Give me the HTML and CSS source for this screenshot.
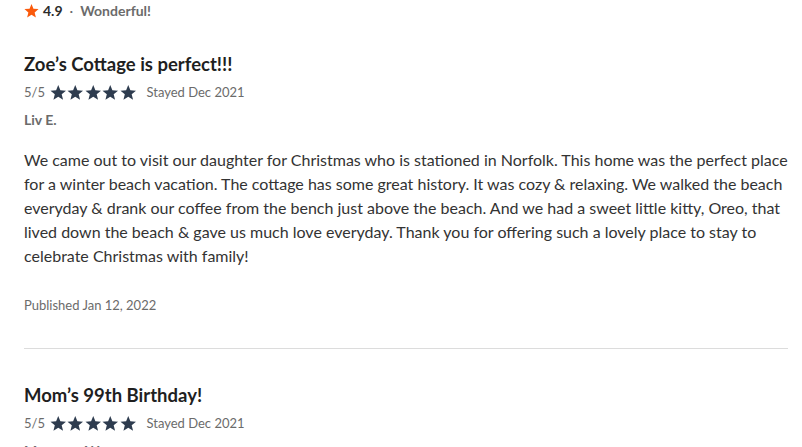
FILE: index.html
```html
<!DOCTYPE html>
<html lang="en">

<head>
    <meta charset="UTF-8">
    <meta name="viewport" content="width=device-width, initial-scale=1.0">
    <title>Reviews</title>
    <link rel="stylesheet" href="styles.css">
</head>

<body>
    <div class="reviews">
        <div class="summary">
            <svg class="summary-star" viewBox="0 0 24 24" aria-hidden="true">
                <path d="M12 1.5l3.1 7.6 8.2.6-6.3 5.3 2 8-7-4.3-7 4.3 2-8L.7 9.7l8.2-.6z" />
            </svg>
            <span class="summary-score">4.9</span>
            <span class="summary-dot">&middot;</span>
            <span class="summary-label">Wonderful!</span>
        </div>

        <article class="review">
            <h3 class="review-title">Zoe’s Cottage is perfect!!!</h3>
            <div class="review-meta">
                <span class="review-rating">5/5</span>
                <span class="stars">
                    <svg viewBox="0 0 24 24"><path d="M12 1.5l3.1 7.6 8.2.6-6.3 5.3 2 8-7-4.3-7 4.3 2-8L.7 9.7l8.2-.6z" /></svg>
                    <svg viewBox="0 0 24 24"><path d="M12 1.5l3.1 7.6 8.2.6-6.3 5.3 2 8-7-4.3-7 4.3 2-8L.7 9.7l8.2-.6z" /></svg>
                    <svg viewBox="0 0 24 24"><path d="M12 1.5l3.1 7.6 8.2.6-6.3 5.3 2 8-7-4.3-7 4.3 2-8L.7 9.7l8.2-.6z" /></svg>
                    <svg viewBox="0 0 24 24"><path d="M12 1.5l3.1 7.6 8.2.6-6.3 5.3 2 8-7-4.3-7 4.3 2-8L.7 9.7l8.2-.6z" /></svg>
                    <svg viewBox="0 0 24 24"><path d="M12 1.5l3.1 7.6 8.2.6-6.3 5.3 2 8-7-4.3-7 4.3 2-8L.7 9.7l8.2-.6z" /></svg>
                </span>
                <span class="review-stay">Stayed Dec 2021</span>
            </div>
            <div class="review-author">Liv E.</div>
            <p class="review-body">We came out to visit our daughter for Christmas who is stationed in Norfolk. This home was the perfect place for a winter beach vacation. The cottage has some great history. It was cozy &amp; relaxing. We walked the beach everyday &amp; drank our coffee from the bench just above the beach. And we had a sweet little kitty, Oreo, that lived down the beach &amp; gave us much love everyday. Thank you for offering such a lovely place to stay to celebrate Christmas with family!</p>
            <div class="review-date">Published Jan 12, 2022</div>
        </article>

        <article class="review">
            <h3 class="review-title">Mom’s 99th Birthday!</h3>
            <div class="review-meta">
                <span class="review-rating">5/5</span>
                <span class="stars">
                    <svg viewBox="0 0 24 24"><path d="M12 1.5l3.1 7.6 8.2.6-6.3 5.3 2 8-7-4.3-7 4.3 2-8L.7 9.7l8.2-.6z" /></svg>
                    <svg viewBox="0 0 24 24"><path d="M12 1.5l3.1 7.6 8.2.6-6.3 5.3 2 8-7-4.3-7 4.3 2-8L.7 9.7l8.2-.6z" /></svg>
                    <svg viewBox="0 0 24 24"><path d="M12 1.5l3.1 7.6 8.2.6-6.3 5.3 2 8-7-4.3-7 4.3 2-8L.7 9.7l8.2-.6z" /></svg>
                    <svg viewBox="0 0 24 24"><path d="M12 1.5l3.1 7.6 8.2.6-6.3 5.3 2 8-7-4.3-7 4.3 2-8L.7 9.7l8.2-.6z" /></svg>
                    <svg viewBox="0 0 24 24"><path d="M12 1.5l3.1 7.6 8.2.6-6.3 5.3 2 8-7-4.3-7 4.3 2-8L.7 9.7l8.2-.6z" /></svg>
                </span>
                <span class="review-stay">Stayed Dec 2021</span>
            </div>
            <div class="review-author">Margaret W.</div>
        </article>
    </div>
</body>

</html>
```

FILE: styles.css
```css
/* guest reviews list */

body {
    margin: 0;
    background: #fff;
    font-family: "Lato", "Open Sans", sans-serif;
    color: #2b2b2b;
}

.reviews {
    width: 764px;
    padding: 0 24px;
}

/* overall score */

.summary {
    display: flex;
    align-items: center;
    height: 20px;
    font-size: 14px;
    font-weight: 700;
}

.summary-star {
    width: 15px;
    height: 15px;
    margin-right: 4px;
    fill: #fa5a0c;
}

.summary-score {
    color: #2b2b2b;
}

.summary-dot {
    margin: 0 7px;
    color: #6b6b6b;
    font-weight: 400;
}

.summary-label {
    color: #6b6b6b;
}

/* single review */

.review {
    padding-top: 32px;
    padding-bottom: 33px;
    border-bottom: 1px solid #dcdcdc;
}

.review + .review {
    padding-top: 34px;
}

.review-title {
    margin: 0;
    font-size: 18.5px;
    font-weight: 700;
    line-height: 24px;
    color: #1f1f1f;
}

.review-meta {
    display: flex;
    align-items: center;
    margin-top: 4px;
    height: 24px;
    font-size: 13px;
    color: #6b6b6b;
}

.stars {
    display: flex;
    gap: 1px;
    margin: 0 10px 0 5px;
}

.stars svg {
    width: 16.5px;
    height: 16.5px;
    fill: #2e3c4f;
}

.review-author {
    margin-top: 6px;
    font-size: 14px;
    font-weight: 700;
    line-height: 20px;
    color: #6b6b6b;
}

.review-body {
    margin: 18px 0 0;
    font-size: 16px;
    line-height: 24px;
    color: #333;
}

.review-date {
    margin-top: 27px;
    font-size: 13px;
    line-height: 20px;
    color: #6b6b6b;
}
```
